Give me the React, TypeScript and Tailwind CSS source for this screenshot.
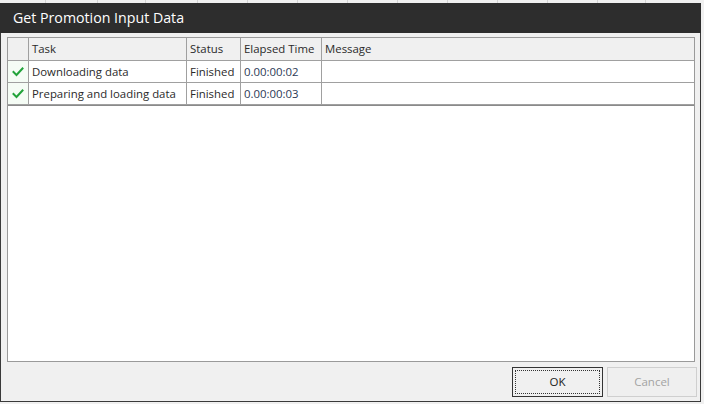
import React from "react";

const font = { fontFamily: '"Open Sans", "Noto Sans", sans-serif' };

function Check() {
  return (
    <svg width="12" height="10" viewBox="0 0 12 10">
      <path d="M1.5 5 L4.5 8 L10.5 1.5" fill="none" stroke="#22a33a" strokeWidth="2" strokeLinecap="square" />
    </svg>
  );
}

const rows = [
  { task: "Downloading data", status: "Finished", time: "0.00:00:02" },
  { task: "Preparing and loading data", status: "Finished", time: "0.00:00:03" },
];

export default function App() {
  const lines = [45, 97, 145, 197, 247, 297, 347, 397, 447, 497, 547, 597, 645];
  return (
    <div className="relative w-[704px] h-[404px] bg-[#f0f0f0] overflow-hidden" style={font}>
      <div className="flex h-[3px]">
        {lines.map((x, i) => (
          <div key={i} className="absolute top-0 h-[3px] w-px bg-[#d4d4d4]" style={{ left: x }} />
        ))}
      </div>
      <div className="flex flex-col w-[701px] h-[399px] border-x border-b border-[#3a3a3a] bg-[#f0f0f0]">
        <div className="h-[30px] shrink-0 bg-[#2d2d2d] text-white text-[14.2px] leading-[30px] pl-[13px] -mx-px">
          Get Promotion Input Data
        </div>
        <div className="flex-1 flex flex-col pt-[4px] pl-[6px] pr-[5px]">
          <div className="h-[325px] border border-[#9a9a9a] bg-white flex flex-col text-[11.4px] text-[#2a2a2a]">
            <div className="grid grid-cols-[21px_158px_54px_81px_1fr] h-[23px] bg-[#f0f0f0]">
              <div className="border-r border-b border-[#a0a0a0]" />
              <div className="border-r border-b border-[#a0a0a0] pl-[3px] leading-[22px]">Task</div>
              <div className="border-r border-b border-[#a0a0a0] pl-[3px] leading-[22px]">Status</div>
              <div className="border-r border-b border-[#a0a0a0] pl-[3px] leading-[22px]">Elapsed Time</div>
              <div className="border-b border-[#a0a0a0] pl-[3px] leading-[22px]">Message</div>
            </div>
            {rows.map((r, i) => (
              <div key={i} className="grid grid-cols-[21px_158px_54px_81px_1fr] h-[22px]">
                <div className="border-r border-b border-[#a0a0a0] flex items-center justify-center bg-[#f5fcf5]">
                  <Check />
                </div>
                <div className="border-r border-b border-[#a0a0a0] pl-[3px] leading-[21px] whitespace-nowrap">{r.task}</div>
                <div className="border-r border-b border-[#a0a0a0] pl-[3px] leading-[21px]">{r.status}</div>
                <div className="border-r border-b border-[#a0a0a0] pl-[3px] leading-[21px] text-[#2b3a55]">{r.time}</div>
                <div className="border-b border-[#a0a0a0]" />
              </div>
            ))}
            <div className="h-px bg-[#8a8a8a]" />
          </div>
          <div className="flex justify-end gap-[4px] pt-[5px] -mr-[2px]">
            <button className="w-[91px] h-[30px] border border-[#333] bg-[#f0f0f0] p-[2px] text-[11.5px] text-[#222]">
              <div className="w-full h-full border border-dotted border-[#333] flex items-center justify-center">OK</div>
            </button>
            <button className="w-[90px] h-[30px] border border-[#cfcfcf] bg-[#efefef] text-[11.5px] text-[#a3a3a3] flex items-center justify-center">
              Cancel
            </button>
          </div>
        </div>
      </div>
    </div>
  );
}
